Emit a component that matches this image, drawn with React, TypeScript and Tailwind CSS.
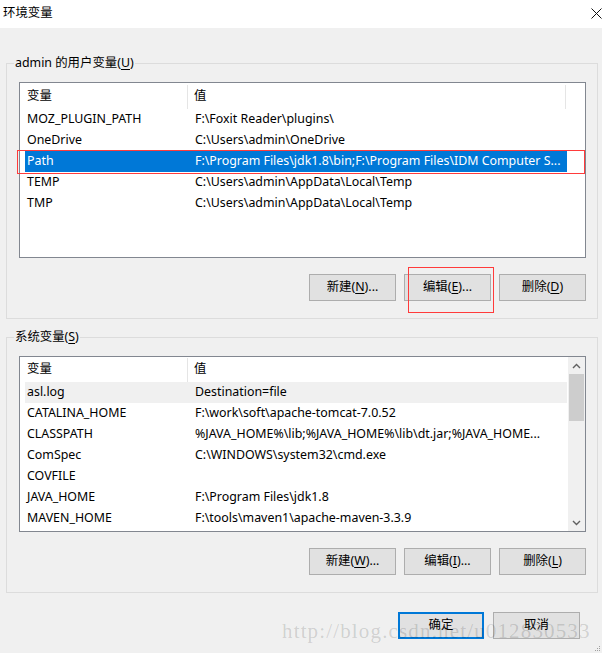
import type { ReactNode } from "react";

type Row = { name: string; value: string };

const USER_VARS: Row[] = [
  { name: "MOZ_PLUGIN_PATH", value: "F:\\Foxit Reader\\plugins\\" },
  { name: "OneDrive", value: "C:\\Users\\admin\\OneDrive" },
  { name: "Path", value: "F:\\Program Files\\jdk1.8\\bin;F:\\Program Files\\IDM Computer S..." },
  { name: "TEMP", value: "C:\\Users\\admin\\AppData\\Local\\Temp" },
  { name: "TMP", value: "C:\\Users\\admin\\AppData\\Local\\Temp" },
];

const SYSTEM_VARS: Row[] = [
  { name: "asl.log", value: "Destination=file" },
  { name: "CATALINA_HOME", value: "F:\\work\\soft\\apache-tomcat-7.0.52" },
  { name: "CLASSPATH", value: "%JAVA_HOME%\\lib;%JAVA_HOME%\\lib\\dt.jar;%JAVA_HOME..." },
  { name: "ComSpec", value: "C:\\WINDOWS\\system32\\cmd.exe" },
  { name: "COVFILE", value: "" },
  { name: "JAVA_HOME", value: "F:\\Program Files\\jdk1.8" },
  { name: "MAVEN_HOME", value: "F:\\tools\\maven1\\apache-maven-3.3.9" },
];

// label with an underlined access key, e.g. 新建(N)...
function Label({ pre, k, post }: { pre: string; k: string; post: string }) {
  return (
    <>
      {pre}
      <span className="underline underline-offset-[2px]">{k}</span>
      {post}
    </>
  );
}

function Button({ children, focused }: { children: ReactNode; focused?: boolean }) {
  return (
    <div
      className={
        focused
          ? "w-[86px] h-[27px] flex items-center justify-center bg-[#e1e1e1] border-2 border-[#0078d7] text-black"
          : "w-[87px] h-[27px] flex items-center justify-center bg-[#e1e1e1] border border-[#adadad] text-black"
      }
    >
      {children}
    </div>
  );
}

function Group({ legend, children }: { legend: ReactNode; children: ReactNode }) {
  return (
    <fieldset className="w-[592px] border border-[#dcdcdc] pl-[12px] pr-[11px] pt-[11px] pb-[17px]">
      <legend className="ml-[-5px] px-[1px] leading-[16px] text-black">{legend}</legend>
      {children}
    </fieldset>
  );
}

function Header({ scroll }: { scroll?: boolean }) {
  return (
    <div className="h-[25px] flex items-center text-black">
      <div className="w-[168px] h-[24px] flex items-center pl-[7px] border-r border-[#e5e5e5]">变量</div>
      <div className={scroll ? "flex-1 pl-[6px]" : "w-[378px] h-[24px] flex items-center pl-[6px] border-r border-[#e5e5e5]"}>值</div>
    </div>
  );
}

function VarRow({ row, selected, hover }: { row: Row; selected?: boolean; hover?: boolean }) {
  const bg = selected ? "bg-[#0078d7] text-white" : hover ? "bg-[#f0f0f0] text-black" : "text-black";
  return (
    <div className={`ml-[5px] w-[542px] h-[21px] flex items-center whitespace-nowrap ${bg}`}>
      <div className="w-[170px] pl-[2px]">{row.name}</div>
      <div className="flex-1 overflow-hidden">{row.value}</div>
    </div>
  );
}

function ScrollBar() {
  return (
    <div className="w-[17px] h-full bg-[#f0f0f0] flex flex-col">
      <div className="h-[17px] flex items-center justify-center">
        <svg width="9" height="6" viewBox="0 0 9 6">
          <path d="M1 5 L4.5 1.5 L8 5" stroke="#606060" strokeWidth="1.4" fill="none" />
        </svg>
      </div>
      <div className="mx-[1px] h-[47px] bg-[#cdcdcd]" />
      <div className="flex-1" />
      <div className="h-[17px] flex items-center justify-center">
        <svg width="9" height="6" viewBox="0 0 9 6">
          <path d="M1 1 L4.5 4.5 L8 1" stroke="#606060" strokeWidth="1.4" fill="none" />
        </svg>
      </div>
    </div>
  );
}

export default function App() {
  return (
    <div className="relative w-[602px] h-[653px] overflow-hidden bg-[#f0f0f0] text-[12.4px] font-['Noto_Sans','Noto_Sans_CJK_SC',sans-serif]">
      {/* title bar */}
      <div className="h-[28px] bg-white flex items-center justify-between pl-[3px] pr-[2px] pb-[2px]">
        <span className="text-black">环境变量</span>
        <svg width="11" height="11" viewBox="0 0 11 11" className="translate-x-[2px]">
          <path d="M0.5 0.5 L10.5 10.5 M10.5 0.5 L0.5 10.5" stroke="#111" strokeWidth="1" />
        </svg>
      </div>

      <div className="pl-[6px] pt-[27px] flex flex-col gap-[10px]">
        <Group legend={<>admin 的用户变量(<span className="underline underline-offset-[2px]">U</span>)</>}>
          <div className="relative w-[567px] h-[176px] border border-[#828790] bg-white">
            <div className="pt-[1px]">
              <Header />
              {USER_VARS.map((r) => (
                <VarRow key={r.name} row={r} selected={r.name === "Path"} />
              ))}
            </div>
            {/* annotation box around the selected row */}
            <div className="absolute left-[-3px] top-[67px] w-[568px] h-[24px] border border-[#ff3b3b]" />
          </div>
          <div className="mt-[16px] flex justify-end gap-[8px]">
            <Button><Label pre="新建(" k="N" post=")..." /></Button>
            <div className="relative">
              <Button><Label pre="编辑(" k="E" post=")..." /></Button>
              <div className="absolute left-[4px] top-[-7px] w-[86px] h-[46px] border border-[#ff3b3b]" />
            </div>
            <Button><Label pre="删除(" k="D" post=")" /></Button>
          </div>
        </Group>

        <Group legend={<>系统变量(<span className="underline underline-offset-[2px]">S</span>)</>}>
          <div className="w-[567px] h-[176px] border border-[#828790] bg-white flex">
            <div className="flex-1">
              <Header scroll />
              {SYSTEM_VARS.map((r) => (
                <VarRow key={r.name} row={r} hover={r.name === "asl.log"} />
              ))}
            </div>
            <ScrollBar />
          </div>
          <div className="mt-[16px] flex justify-end gap-[8px]">
            <Button><Label pre="新建(" k="W" post=")..." /></Button>
            <Button><Label pre="编辑(" k="I" post=")..." /></Button>
            <Button><Label pre="删除(" k="L" post=")" /></Button>
          </div>
        </Group>

        <div className="mt-[9px] flex justify-end gap-[9px] pr-[22px]">
          <Button focused>确定</Button>
          <Button>取消</Button>
        </div>
      </div>

      {/* csdn watermark */}
      <div className="absolute left-[282px] top-[616px] text-[21px] tracking-[1.15px] text-black/15 font-['Liberation_Serif',serif] pointer-events-none">
        http://blog.csdn.net/u012830533
      </div>

      {/* resize grip */}
      <svg width="6" height="6" viewBox="0 0 6 6" className="absolute right-[1px] bottom-[1px]">
        <rect x="4" y="0" width="1" height="1" fill="#a0a0a0" />
        <rect x="2" y="2" width="1" height="1" fill="#a0a0a0" />
        <rect x="4" y="2" width="1" height="1" fill="#a0a0a0" />
        <rect x="0" y="4" width="1" height="1" fill="#a0a0a0" />
        <rect x="2" y="4" width="1" height="1" fill="#a0a0a0" />
        <rect x="4" y="4" width="1" height="1" fill="#a0a0a0" />
      </svg>
    </div>
  );
}
